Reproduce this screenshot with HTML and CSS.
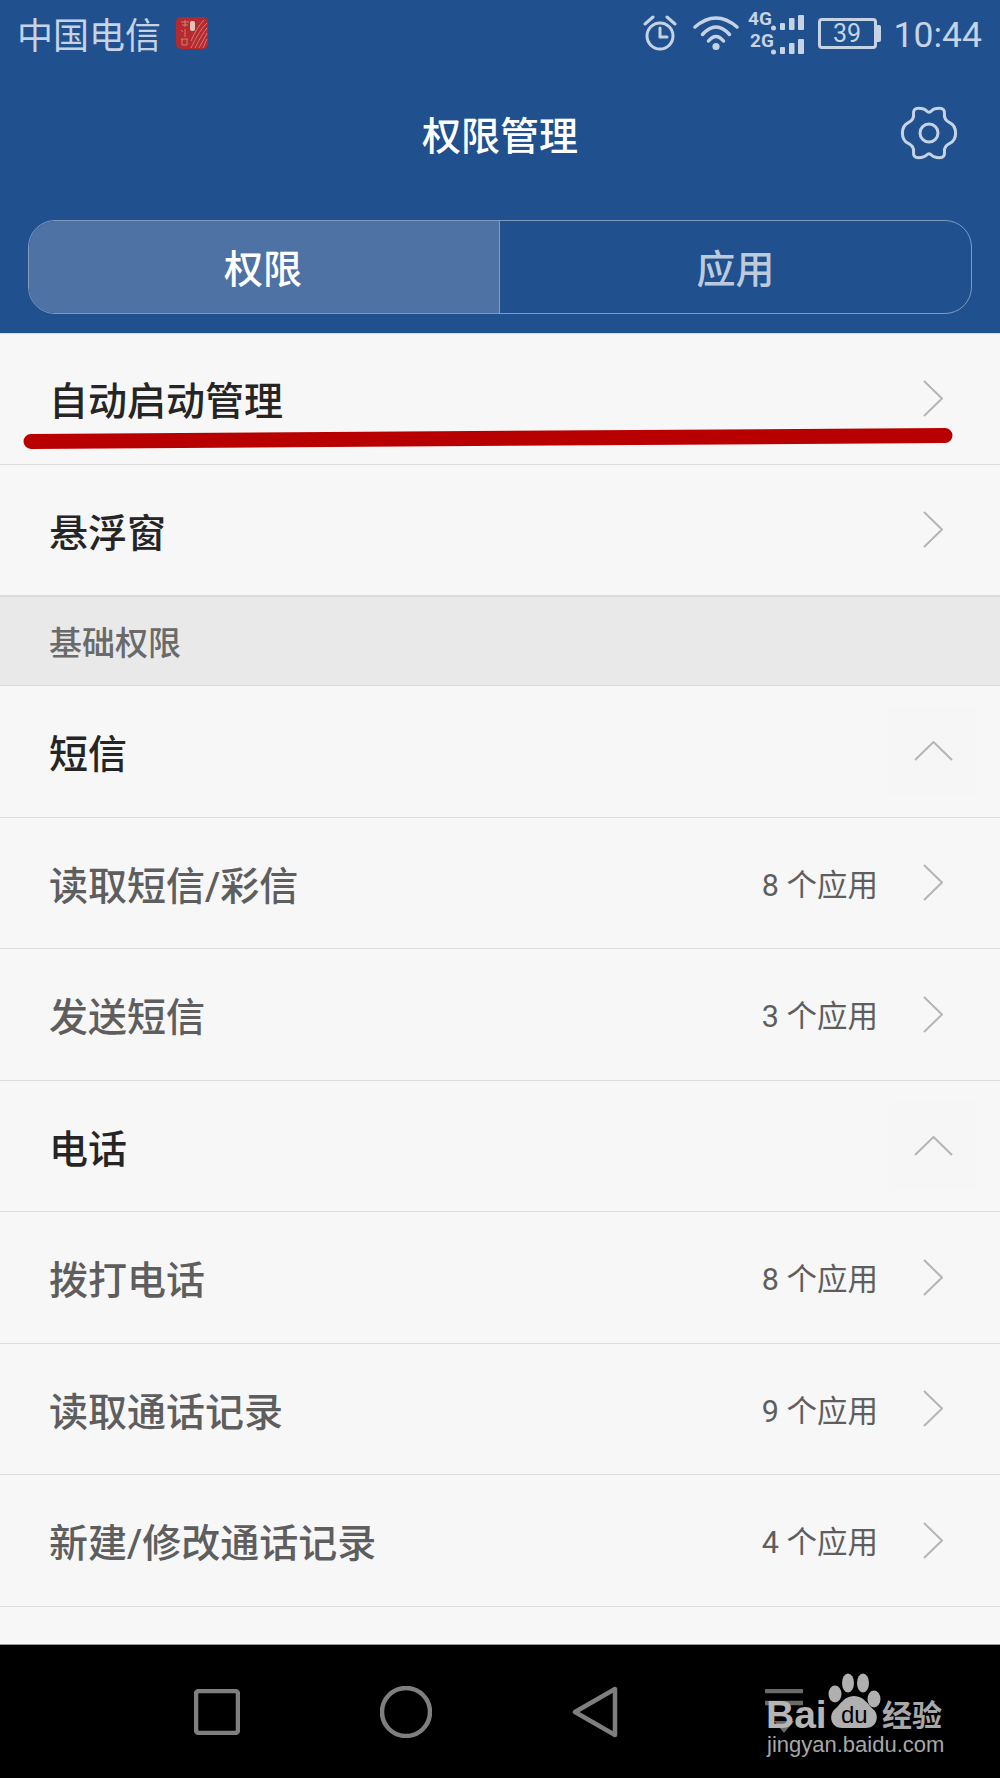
FILE: index.html
```html
<!DOCTYPE html>
<html>
    <head>
        <meta charset="utf-8">
        <title>权限管理</title>
        <link rel="stylesheet" href="styles.css">
    </head>
    <body>
        <header class="appbar">
            <div class="status">
                <span class="carrier">中国电信</span>
                <svg class="sim-logo" width="32" height="32" viewBox="0 0 32 32">
                    <rect width="32" height="32" rx="5" fill="#b42a2e"/>
                    <g stroke="#d98f85" stroke-width="0.8" fill="none">
                        <path d="M31 6 Q24 12 15 31M31 11 Q26 17 19 31M31 16 Q28 22 23 31M31 22 Q29 26 27 31M28 3 Q21 10 15 24"/>
                        <path d="M5 5h8M6 8h6M9 3v7M5 13l2 2M9 12v8M5 22h7M6 22v6M11 22v6M6 28h5"/>
                    </g>
                    <rect x="14" y="4" width="5" height="10" rx="2" fill="#e3c4b4"/>
                </svg>
                <svg class="ic-alarm" width="34" height="36" viewBox="643 15 34 36">
                    <g class="ic-line" stroke-width="3">
                        <circle cx="660" cy="36" r="13"/>
                        <path d="M660 28v9h7"/>
                        <path d="M645 24l8-7M675 24l-8-7"/>
                    </g>
                </svg>
                <svg class="ic-wifi" width="46" height="36" viewBox="693 16 46 36">
                    <g class="ic-line" stroke-width="3.5">
                        <path d="M695 28Q716 10 737 28"/>
                        <path d="M702.5 35.5Q716 20.5 729.5 35.5"/>
                        <path d="M708.5 42Q716 33 723.5 42"/>
                    </g>
                    <circle class="ic-fill" cx="716" cy="47.500" r="3.600"/>
                </svg>
                <svg class="ic-net" width="57" height="56" viewBox="748 5 57 56">
                    <text class="net-label" x="748" y="25">4G</text>
                    <text class="net-label" x="750" y="47">2G</text>
                    <g class="ic-fill">
                        <circle cx="773.500" cy="28" r="2.500"/>
                        <rect x="780" y="23" width="5" height="7" rx="1"/>
                        <rect x="789" y="18" width="5.500" height="12" rx="1"/>
                        <rect x="798" y="15" width="6" height="15" rx="1"/>
                        <circle cx="773.500" cy="52" r="2.500"/>
                        <rect x="780" y="47" width="5" height="7" rx="1"/>
                        <rect x="789" y="43" width="5.500" height="11" rx="1"/>
                        <rect x="798" y="39" width="6" height="15" rx="1"/>
                    </g>
                </svg>
                <span class="battery"><span class="battery-level">39</span></span>
                <span class="clock">10:44</span>
            </div>
            <div class="titlebar">
                <h1 class="title">权限管理</h1>
                <svg class="gear" width="60" height="56" viewBox="-30 -28 60 56">
                    <path class="ic-line" stroke-width="3.2" transform="scale(0.95)" d="M28 0Q28 -8 21.75 -11Q15.5 -14 16.25 -20Q17 -26 11 -26Q5 -26 2.5 -23.25Q0 -20.5 -2.5 -23.25Q-5 -26 -11 -26Q-17 -26 -16.25 -20Q-15.5 -14 -21.75 -11Q-28 -8 -28 0Q-28 8 -21.75 11Q-15.5 14 -16.25 20Q-17 26 -11 26Q-5 26 -2.5 23.25Q0 20.5 2.5 23.25Q5 26 11 26Q17 26 16.25 20Q15.5 14 21.75 11Q28 8 28 0Z"/>
                    <circle class="ic-line" stroke-width="3" cx="0" cy="0" r="9"/>
                </svg>
            </div>
            <div class="tabs">
                <div class="tab tab-active">权限</div>
                <div class="tab">应用</div>
            </div>
        </header>

        <main class="list">
            <div class="row row-main row-marked">
                <span>自动启动管理</span>
                <svg class="chevron" width="20" height="37" viewBox="0 0 20 37"><polyline points="1,1 19,18.5 1,36"/></svg>
                <svg class="mark" width="935" height="25" viewBox="0 0 935 25"><line x1="11" y1="16.500" x2="925" y2="10.500"/></svg>
            </div>
            <div class="row row-main">
                <span>悬浮窗</span>
                <svg class="chevron" width="20" height="37" viewBox="0 0 20 37"><polyline points="1,1 19,18.5 1,36"/></svg>
            </div>
            <div class="section">基础权限</div>
            <div class="row row-main row-group">
                <span>短信</span>
                <div class="collapse"><svg class="chevron" width="39" height="20" viewBox="0 0 39 20"><polyline points="1,19 19.5,1 38,19"/></svg></div>
            </div>
            <div class="row">
                <span>读取短信/彩信</span>
                <span class="count">8 个应用</span>
                <svg class="chevron" width="20" height="37" viewBox="0 0 20 37"><polyline points="1,1 19,18.5 1,36"/></svg>
            </div>
            <div class="row">
                <span>发送短信</span>
                <span class="count">3 个应用</span>
                <svg class="chevron" width="20" height="37" viewBox="0 0 20 37"><polyline points="1,1 19,18.5 1,36"/></svg>
            </div>
            <div class="row row-main row-group">
                <span>电话</span>
                <div class="collapse"><svg class="chevron" width="39" height="20" viewBox="0 0 39 20"><polyline points="1,19 19.5,1 38,19"/></svg></div>
            </div>
            <div class="row">
                <span>拨打电话</span>
                <span class="count">8 个应用</span>
                <svg class="chevron" width="20" height="37" viewBox="0 0 20 37"><polyline points="1,1 19,18.5 1,36"/></svg>
            </div>
            <div class="row">
                <span>读取通话记录</span>
                <span class="count">9 个应用</span>
                <svg class="chevron" width="20" height="37" viewBox="0 0 20 37"><polyline points="1,1 19,18.5 1,36"/></svg>
            </div>
            <div class="row">
                <span>新建/修改通话记录</span>
                <span class="count">4 个应用</span>
                <svg class="chevron" width="20" height="37" viewBox="0 0 20 37"><polyline points="1,1 19,18.5 1,36"/></svg>
            </div>
        </main>

        <nav class="navbar">
            <div class="nav-slot">
                <svg width="46" height="46" viewBox="0 0 46 46"><rect class="nav-ic" x="2" y="2" width="42" height="42" rx="3"/></svg>
            </div>
            <div class="nav-slot">
                <svg width="52" height="52" viewBox="0 0 52 52"><circle class="nav-ic" cx="26" cy="26" r="24"/></svg>
            </div>
            <div class="nav-slot">
                <svg width="46" height="52" viewBox="0 0 46 52"><path class="nav-ic" d="M3 26L43 3V49Z"/></svg>
            </div>
            <div class="nav-slot">
                <svg width="40" height="46" viewBox="0 0 40 46">
                    <path class="nav-ic nav-ic-thin" d="M1 2H39M1 14H39"/>
                    <path class="nav-tri" d="M10 32H30L20 44Z"/>
                </svg>
            </div>
            <svg class="watermark" width="190" height="90" viewBox="760 1672 190 90">
                <text class="wm-bai" x="766" y="1727">Bai</text>
                <g class="wm-paw">
                    <ellipse cx="835" cy="1693" rx="6.500" ry="8.500"/>
                    <ellipse cx="848" cy="1682" rx="6" ry="9.500"/>
                    <ellipse cx="863" cy="1682" rx="6" ry="9.500"/>
                    <ellipse cx="874" cy="1698" rx="6.500" ry="8.500"/>
                    <path d="M854 1695C864 1695 868 1704 874 1709C880 1716 876 1727 866 1727H842C832 1727 828 1716 834 1709C840 1704 844 1695 854 1695Z"/>
                </g>
                <text class="wm-du" x="841" y="1722">du</text>
                <text class="wm-jy" x="882" y="1725">经验</text>
                <text class="wm-url" x="767" y="1751">jingyan.baidu.com</text>
            </svg>
        </nav>
    </body>
</html>
```
FILE: styles.css
```css
* {
    box-sizing: border-box;
}

body {
    margin: 0;
    width: 1000px;
    height: 1778px;
    display: flex;
    flex-direction: column;
    background: #f7f7f7;
    font-family: Roboto, "Noto Sans CJK SC", sans-serif;
}

.appbar {
    height: 333px;
    flex: none;
    position: relative;
    background: #20508d;
    box-shadow: 0 1px 0 #d5dde8;
    color: #c6d3e5;
}

.status {
    height: 66px;
    display: flex;
    align-items: center;
    padding: 0 18px 0 17px;
}

.carrier {
    font-size: 36px;
}

.sim-logo {
    margin-left: 15px;
}

.ic-alarm {
    margin-left: auto;
}

.ic-wifi {
    margin-left: 16px;
}

.ic-net {
    margin-left: 9px;
}

.ic-line {
    fill: none;
    stroke: #c6d3e5;
    stroke-linecap: round;
    stroke-linejoin: round;
}

.ic-fill {
    fill: #c6d3e5;
}

.net-label {
    font-size: 19px;
    font-weight: 700;
    fill: #c6d3e5;
}

.battery {
    width: 63px;
    height: 31px;
    margin-left: 13px;
    display: flex;
}

.battery-level {
    width: 59px;
    height: 31px;
    border: 3px solid #c6d3e5;
    border-radius: 4px;
    font-size: 25px;
    line-height: 25px;
    text-align: center;
}

.battery::after {
    content: "";
    width: 4px;
    height: 17px;
    margin-top: 7px;
    background: #c6d3e5;
    border-radius: 0 2px 2px 0;
}

.clock {
    margin-left: 13px;
    padding-top: 3px;
    font-size: 35.5px;
}

.titlebar {
    height: 134px;
    display: grid;
    grid-template-columns: 1fr auto 1fr;
    align-items: center;
}

.title {
    grid-column: 2;
    margin: 0;
    font-size: 39px;
    font-weight: 500;
    color: #fff;
}

.gear {
    justify-self: end;
    margin-right: 41px;
}

.tabs {
    height: 94px;
    margin: 20px 28px 0;
    display: flex;
    border: 1px solid #7f9bc0;
    border-radius: 27px;
    overflow: hidden;
}

.tab {
    flex: 1;
    display: flex;
    align-items: center;
    justify-content: center;
    padding-bottom: 3px;
    font-size: 39px;
    font-weight: 500;
    color: #bccade;
}

.tab-active {
    flex: none;
    width: 471px;
    padding-right: 2px;
    background: #4e72a4;
    border-right: 1px solid #7f9bc0;
    color: #fff;
}

.list {
    flex: 1;
}

.row {
    height: 131.5px;
    display: flex;
    align-items: center;
    padding: 0 57px 0 49px;
    border-bottom: 1px solid #dcdcdc;
    font-size: 39px;
    font-weight: 500;
    color: #5e5e5e;
}

.row-main {
    color: #252525;
}

.row-marked {
    position: relative;
}

.mark {
    position: absolute;
    left: 20px;
    top: 92px;
}

.mark line {
    stroke: #b80000;
    stroke-width: 15;
    stroke-linecap: round;
}

.count {
    margin-left: auto;
    margin-right: 45px;
    font-size: 30.5px;
    font-weight: 400;
}

.chevron {
    margin-left: auto;
    fill: none;
    stroke: #b5b5b5;
    stroke-width: 2;
}

.count + .chevron {
    margin-left: 0;
}

.row-group {
    padding-right: 23px;
}

.collapse {
    width: 88px;
    height: 88px;
    margin-left: auto;
    display: flex;
    align-items: center;
    justify-content: center;
    background: #f6f6f6;
}

.collapse .chevron {
    margin: 0;
}

.section {
    height: 90px;
    display: flex;
    align-items: center;
    padding-left: 49px;
    background: #e9e9e9;
    border-top: 1px solid #dcdcdc;
    border-bottom: 1px solid #d8d8d8;
    font-size: 33px;
    font-weight: 500;
    color: #6a6a6a;
}

.navbar {
    height: 134px;
    flex: none;
    position: relative;
    display: flex;
    align-items: center;
    padding-left: 122px;
    background: #000;
    border-top: 1px solid #9a9a9a;
}

.nav-slot {
    width: 189px;
    display: flex;
    justify-content: center;
}

.nav-ic {
    fill: none;
    stroke: #7f7f7f;
    stroke-width: 4.5;
    stroke-linejoin: round;
}

.nav-ic-thin {
    stroke: #6a6a6a;
}

.nav-tri {
    fill: #6a6a6a;
}

.watermark {
    position: absolute;
    left: 760px;
    top: 28px;
}

.wm-bai {
    font-family: "Liberation Sans", sans-serif;
    font-size: 39px;
    font-weight: 700;
    fill: #b5b5b5;
}

.wm-paw {
    fill: #b0b0b0;
}

.wm-du {
    font-family: "Liberation Sans", sans-serif;
    font-size: 24px;
    fill: #000;
}

.wm-jy {
    font-family: "Noto Sans CJK SC", sans-serif;
    font-size: 30px;
    font-weight: 700;
    fill: #a8a8a8;
}

.wm-url {
    font-family: "Liberation Sans", sans-serif;
    font-size: 22px;
    fill: #a8a8a8;
}
```
